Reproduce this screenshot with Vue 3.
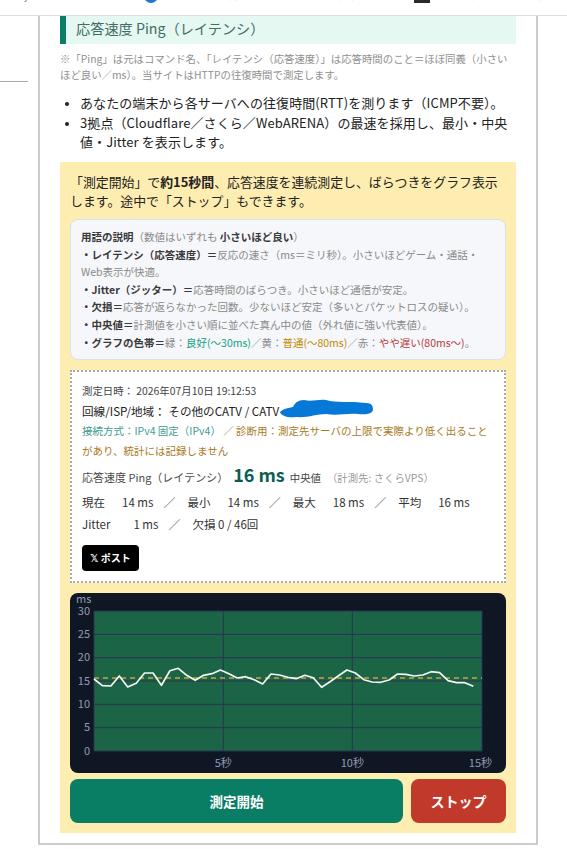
<script setup>
const raw = [282,302,303,273,306,295,264,264,301,257,250,271,286,271,266,255,266,279,275,284,297,267,270,277,281,271,278,307,290,272,255,264,284,291,292,285,267,268,273,270,260,263,287,293,293,304]
const X0 = 24, Y0 = 18, W = 388, H = 140
const points = raw.map((p, i) => `${(X0 + 8.43 * i).toFixed(1)},${(p / 3 + 585 - 593).toFixed(1)}`).join(' ')
const yTicks = [0, 5, 10, 15, 20, 25, 30].map(v => ({ v, y: Y0 + H - (v / 30) * H }))
const xTicks = [
  { t: '5秒', x: 153.3 },
  { t: '10秒', x: 282.3 },
]
const stats = [
  { k: '現在', v: '14 ms' },
  { k: '最小', v: '14 ms' },
  { k: '最大', v: '18 ms' },
  { k: '平均', v: '16 ms' },
]
</script>

<template>
  <div class="page">
    <div class="topbar">
      <div class="topclip">
        <span class="tb1">y</span>
        <i class="dot"></i>
        <span class="tb2">インターネット回線速度</span>
        <span class="tb3">測定結果一覧ランキング</span>
        <i class="thumb"></i>
        <span class="tb4">通信速度テストツール比較ガイド</span>
      </div>
    </div>
    <div class="main">
      <aside class="side"><div class="sideline"></div></aside>
      <section class="card">
        <h2 class="heading">応答速度 Ping（レイテンシ）</h2>
        <p class="note">※「Ping」は元はコマンド名、「レイテンシ（応答速度）」は応答時間のこと＝ほぼ同義（小さいほど良い／ms）。当サイトはHTTPの往復時間で測定します。</p>
        <ul class="list">
          <li>あなたの端末から各サーバへの往復時間(RTT)を測ります（ICMP不要）。</li>
          <li>3拠点（Cloudflare／さくら／WebARENA）の最速を採用し、最小・中央値・Jitter を表示します。</li>
        </ul>
        <div class="panel">
          <p class="intro">「測定開始」で<b>約15秒間</b>、応答速度を連続測定し、ばらつきをグラフ表示します。途中で「ストップ」もできます。</p>
          <div class="terms">
            <div><b>用語の説明</b>（数値はいずれも <b>小さいほど良い</b>）</div>
            <div><b>・レイテンシ（応答速度）＝</b>反応の速さ（ms＝ミリ秒）。小さいほどゲーム・通話・Web表示が快適。</div>
            <div><b>・Jitter（ジッター）＝</b>応答時間のばらつき。小さいほど通信が安定。</div>
            <div><b>・欠損＝</b>応答が返らなかった回数。少ないほど安定（多いとパケットロスの疑い）。</div>
            <div><b>・中央値＝</b>計測値を小さい順に並べた真ん中の値（外れ値に強い代表値）。</div>
            <div><b>・グラフの色帯＝</b>緑：<span class="g">良好(〜30ms)</span>／黄：<span class="y">普通(〜80ms)</span>／赤：<span class="r">やや遅い(80ms〜)</span>。</div>
          </div>
          <div class="result">
            <div class="r-date">測定日時： 2026年07月10日 19:12:53</div>
            <div class="r-isp">回線/ISP/地域： その他のCATV / CATV
              <svg class="scribble" viewBox="0 0 93 19" aria-hidden="true">
                <path d="M0 13 C4 9 9 9 13 8 C15 4 18 1 24 1 C32 3 38 0 46 1 C56 4 70 2 86 4 C92 4 93 7 93 11 C92 15 86 16 78 15 C66 14 58 17 46 15 C36 15 28 19 16 18 C8 19 1 17 0 13 Z" fill="#0678d8"/>
              </svg>
            </div>
            <div class="r-conn"><span class="teal">接続方式：IPv4 固定（IPv4）</span><span class="amber"> ／ 診断用：測定先サーバの上限で実際より低く出ることがあり、統計には記録しません</span></div>
            <div class="r-main">
              <span class="r-name">応答速度 Ping（レイテンシ）</span>
              <strong class="r-val">16 ms</strong>
              <span class="r-med">中央値</span>
              <span class="r-src">（計測先: さくらVPS）</span>
            </div>
            <div class="r-stats">
              <template v-for="(s, i) in stats" :key="s.k">
                <span class="st"><span class="k">{{ s.k }}</span>{{ s.v }}</span>
                <span v-if="i < stats.length - 1" class="sl">／</span>
              </template>
            </div>
            <div class="r-stats r-stats2">
              <span class="st"><span class="k kj">Jitter</span>1 ms</span>
              <span class="sl">／</span>
              <span class="st loss">欠損 0 / 46回</span>
            </div>
            <button class="post" type="button"><span class="xlogo">𝕏</span> ポスト</button>
          </div>
          <div class="chart">
            <svg viewBox="0 0 436 180" width="436" height="180" class="chart-svg">
              <rect :x="X0" :y="Y0" :width="W" :height="H" fill="#1c6446"/>
              <line v-for="t in yTicks" :key="t.v" :x1="X0" :x2="X0 + W" :y1="t.y" :y2="t.y" stroke="#2a3352" stroke-width="1"/>
              <line :x1="X0" :x2="X0" :y1="Y0" :y2="Y0 + H" stroke="#2a3352"/>
              <line v-for="t in xTicks" :key="t.t" :x1="t.x" :x2="t.x" :y1="Y0" :y2="Y0 + H" stroke="#2a3352"/>
              <line :x1="X0 + W" :x2="X0 + W" :y1="Y0" :y2="Y0 + H" stroke="#2a3352"/>
              <line :x1="X0" :x2="X0 + W" y1="85" y2="85" stroke="#c2a83c" stroke-width="1.6" stroke-dasharray="5 4"/>
              <polyline :points="points" fill="none" stroke="#f4f7f5" stroke-width="1.7" stroke-linejoin="round"/>
              <text x="6" y="9.5" class="lbl">ms</text>
              <text v-for="t in yTicks" :key="'l' + t.v" x="20" :y="t.y + 3.5" text-anchor="end" class="lbl">{{ t.v }}</text>
              <text v-for="t in xTicks" :key="'x' + t.t" :x="t.x" y="174" text-anchor="middle" class="lbl">{{ t.t }}</text>
              <text x="422" y="174" text-anchor="end" class="lbl">15秒</text>
            </svg>
          </div>
          <div class="btns">
            <button class="btn start" type="button">測定開始</button>
            <button class="btn stop" type="button">ストップ</button>
          </div>
        </div>
      </section>
    </div>
  </div>
</template>

<style>
html, body { margin: 0; background: #fff; overflow: hidden; }
</style>

<style scoped>
.page {
  width: 567px;
  height: 849px;
  overflow: hidden;
  background: #fff;
  font-family: "Noto Sans CJK JP", "Noto Sans", sans-serif;
  color: #222;
}
.topbar {
  height: 15px;
  border-bottom: 1px solid #ddd;
  overflow: hidden;
}
.topclip {
  display: flex;
  align-items: flex-end;
  height: 3px;
  font-size: 9px;
  line-height: 11px;
  color: #7a7a98;
  overflow: hidden;
  white-space: nowrap;
}
.topclip span { transform: translateY(-2px); }
.tb1 { margin-left: 24px; }
.dot { flex: none; width: 14px; height: 14px; border-radius: 50%; background: #1f78c8; margin-left: 115px; }
.tb2 { margin-left: 8px; width: 88px; overflow: hidden; }
.tb3 { margin-left: 67px; width: 70px; overflow: hidden; }
.thumb { flex: none; width: 16px; height: 3px; background: #2b2b2b; margin-left: 23px; }
.tb4 { margin-left: 8px; width: 103px; overflow: hidden; }
.main { display: flex; align-items: flex-start; }
.side { width: 38px; flex: none; }
.sideline { width: 28px; height: 1px; background: #aaa; margin-top: 65px; }
.card {
  width: 456px;
  border: solid #ccc;
  border-width: 0 2px 2px;
  padding: 0 20px 10px;
  flex: none;
}
.heading {
  margin: 0;
  height: 28px;
  line-height: 24px;
  padding-left: 10px;
  border-left: 6px solid #0a7d65;
  background: #e6f8f2;
  font-size: 14.2px;
  font-weight: 400;
  color: #3f6d64;
}
.note {
  margin: 6.7px 0 0;
  font-size: 10.4px;
  line-height: 16.6px;
  color: #8f8f8f;
}
.list {
  margin: 9.3px 0 0;
  padding: 0 0 0 20px;
  font-size: 13px;
  line-height: 19.5px;
  letter-spacing: 0.08px;
  color: #222;
}
.list li::marker { font-size: 10px; }
.panel {
  margin-top: 10.3px;
  background: #feedb0;
  padding: 10px;
}
.intro {
  margin: 0;
  font-size: 12.9px;
  line-height: 19.5px;
  color: #222;
}
.terms {
  margin-top: 8px;
  background: #f5f7fa;
  border: 1px solid #d9e2ec;
  border-radius: 8px;
  padding: 8px 10px;
  font-size: 10.5px;
  line-height: 17.6px;
  color: #8a8a8a;
}
.terms b { color: #3a3a3a; font-weight: 700; }
.g { color: #12a083; }
.y { color: #c08a00; }
.r { color: #b8383a; }
.result {
  margin-top: 10px;
  height: 209px;
  box-sizing: content-box;
  background: #fff;
  border: 2px dotted #aaa;
  padding: 0 10px;
}
.r-date { padding-top: 9px; font-size: 10.4px; line-height: 20px; color: #444; }
.r-isp { position: relative; font-size: 11.6px; line-height: 20px; color: #222; }
.scribble { position: absolute; left: 198px; top: -2px; width: 93px; height: 19px; }
.r-conn { font-size: 10.5px; line-height: 19.5px; }
.teal { color: #3f9d90; }
.amber { color: #a8791c; }
.r-main { display: flex; align-items: baseline; height: 28px; line-height: 28px; white-space: nowrap; }
.r-name { font-size: 11px; color: #4a4a4a; }
.r-val { font-size: 18px; font-weight: 700; color: #0b5d4f; margin-left: 5px; }
.r-med { font-size: 10.4px; color: #444; margin-left: 5px; }
.r-src { font-size: 10.4px; color: #999; margin-left: 6px; }
.r-stats { display: flex; align-items: center; margin-top: 4px; height: 20px; font-size: 11.5px; color: #333; white-space: nowrap; }
.r-stats2 { margin-top: 2px; }
.st { display: inline-block; }
.k { display: inline-block; margin-right: 17px; }
.kj { margin-right: 23px; }
.sl { color: #777; margin: 0 12px 0 10px; font-size: 12px; }
.post {
  display: block;
  width: 57px;
  height: 26px;
  margin-top: 11px;
  padding: 0;
  border: 0;
  border-radius: 4px;
  background: #000;
  color: #fff;
  font: 700 10px/26px "Noto Sans CJK JP", sans-serif;
}
.xlogo { font-family: "DejaVu Sans", sans-serif; font-weight: 700; }
.chart {
  margin-top: 10px;
  height: 180px;
  background: #0f1724;
  border-radius: 8px;
  overflow: hidden;
}
.chart-svg { display: block; }
.lbl { font-size: 11px; fill: #8f9bb5; font-family: "Noto Sans CJK JP", sans-serif; }
.btns { display: flex; gap: 8px; margin-top: 6px; }
.btn {
  height: 44px;
  border: 0;
  border-radius: 8px;
  color: #fff;
  font: 700 13.5px/44px "Noto Sans CJK JP", sans-serif;
  padding: 0;
}
.start { flex: 1; background: #0a7d65; }
.stop { width: 95px; background: #c0392b; font-size: 14px; }
</style>
